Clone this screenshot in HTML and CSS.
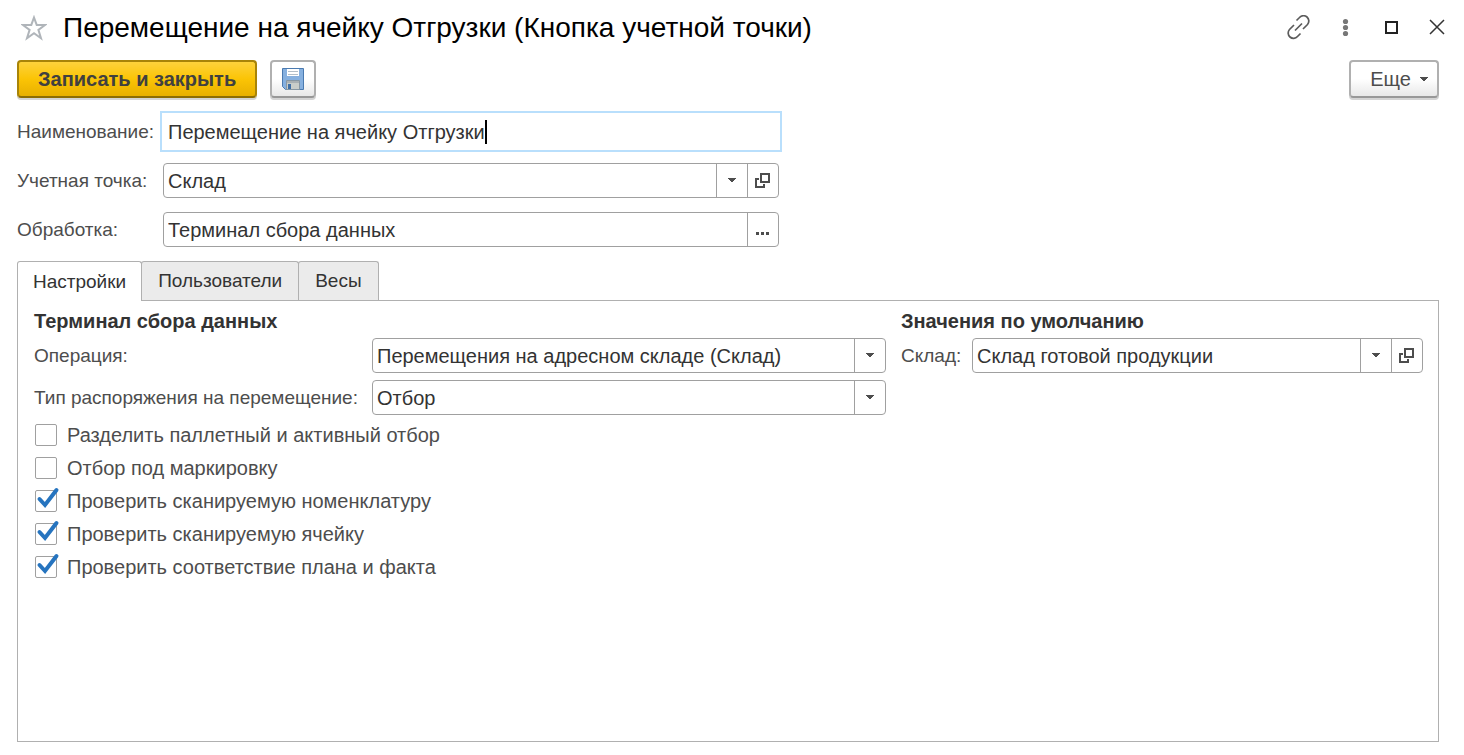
FILE: index.html
```html
<!DOCTYPE html>
<html lang="ru">
<head>
<meta charset="utf-8">
<meta name="viewport" content="width=device-width, initial-scale=1">
<title>Перемещение на ячейку Отгрузки (Кнопка учетной точки)</title>
<link rel="stylesheet" href="styles.css">
</head>
<body class="window">
<svg class="sprite" aria-hidden="true">
  <symbol id="arrow" viewBox="0 0 8 5"><path d="M0 0h8v1H7v1H6v1H5v1H3V3H2V2H1V1H0z" fill="#4d4d4d"/></symbol>
  <symbol id="open" viewBox="0 0 16 16"><path d="M6 1h8v8H6zM4 6H1v8h8v-3" fill="none" stroke="#4d4d4d" stroke-width="2"/></symbol>
  <symbol id="tick" viewBox="0 0 26 26"><path d="M5.500 13l5.500 6L22.500 4" fill="none" stroke="#2674bf" stroke-width="4" stroke-linecap="round"/></symbol>
</svg>

<header class="titlebar">
  <button class="icon-button" type="button" aria-label="Добавить в избранное">
    <svg width="26" height="26" viewBox="0 0 26 26"><path d="M13 2.500l2.700 7.400 8.300.1-6.600 4.900 2.600 8.400-7-5-7 5 2.600-8.400L2 10l8.300-.1z" fill="none" stroke="#b0b5ba" stroke-width="2"/></svg>
  </button>
  <h1 class="title">Перемещение на ячейку Отгрузки (Кнопка учетной точки)</h1>
  <div class="window-tools">
    <button class="icon-button" type="button" aria-label="Получить ссылку">
      <svg width="26" height="26" viewBox="0 0 26 26" fill="none" stroke="#5c5c5c" stroke-width="1.700"><path d="M9 15.500l7-7M10.500 5.500l3-3a5 5 0 0 1 8 7l-4.500 4.500M8 10l-4.500 4.500a5 5 0 0 0 8 7l3-3"/></svg>
    </button>
    <button class="icon-button" type="button" aria-label="Меню">
      <svg width="26" height="26" viewBox="0 0 26 26" fill="#777"><circle cx="13.500" cy="6.500" r="2.600"/><circle cx="13.500" cy="12.500" r="2.600"/><circle cx="13.500" cy="18.500" r="2.600"/></svg>
    </button>
    <button class="icon-button" type="button" aria-label="Развернуть">
      <svg width="26" height="26" viewBox="0 0 26 26"><path d="M8 7h11v11H8z" fill="none" stroke="#222" stroke-width="2"/></svg>
    </button>
    <button class="icon-button" type="button" aria-label="Закрыть">
      <svg width="26" height="26" viewBox="0 0 26 26"><path d="M6 5l14 14M20 5l-14 14" stroke="#333" stroke-width="1.500"/></svg>
    </button>
  </div>
</header>

<div class="toolbar">
  <button class="button button-primary" type="button">Записать и закрыть</button>
  <button class="button button-save" type="button" aria-label="Записать">
    <svg width="22" height="22" viewBox="0 0 22 22"><path d="M.5.500h21v21H3.500l-3-3z" fill="#86b0df" stroke="#4a7ab0"/><path d="M5 1h12v7H5z" fill="#fff"/><path d="M6 3.500h10M6 6.500h10" stroke="#b3bfc9"/><path d="M4.500 12.500h13v9h-13z" fill="#c9cdc9" stroke="#8797a3"/><path d="M5 13h12v2H5z" fill="#a9b0b3"/><path d="M6 16h3v5H6z" fill="#3f6fa6"/></svg>
  </button>
  <button class="button button-more" type="button">Еще <svg width="8" height="5"><use href="#arrow"/></svg></button>
</div>

<form class="main-form">
  <label class="label" for="name">Наименование:</label>
  <label class="field field-active"><input class="control control-name" id="name" type="text" value="Перемещение на ячейку Отгрузки"><span class="caret"></span></label>

  <label class="label" for="point">Учетная точка:</label>
  <div class="field">
    <div class="dropdown"><select class="control" id="point"><option>Склад</option></select><span class="cell dropdown-arrow"><svg width="8" height="5"><use href="#arrow"/></svg></span></div>
    <button class="cell" type="button" aria-label="Открыть"><svg width="16" height="16"><use href="#open"/></svg></button>
  </div>

  <label class="label" for="handler">Обработка:</label>
  <div class="field">
    <input class="control" id="handler" type="text" value="Терминал сбора данных">
    <button class="cell" type="button" aria-label="Выбрать"><svg width="14" height="12" viewBox="0 0 14 12"><path d="M0 8h3v3H0zM5 8h3v3H5zM10 8h3v3h-3z" fill="#4d4d4d"/></svg></button>
  </div>
</form>

<div class="tabs" role="tablist">
  <button class="tab tab-current" type="button" role="tab" aria-selected="true">Настройки</button>
  <button class="tab" type="button" role="tab" aria-selected="false">Пользователи</button>
  <button class="tab" type="button" role="tab" aria-selected="false">Весы</button>
</div>

<main class="panel" role="tabpanel">
  <section class="group">
    <h2 class="heading">Терминал сбора данных</h2>
    <div class="rows rows-terminal">
      <label class="label" for="operation">Операция:</label>
      <div class="field"><div class="dropdown"><select class="control" id="operation"><option>Перемещения на адресном складе (Склад)</option></select><span class="cell dropdown-arrow"><svg width="8" height="5"><use href="#arrow"/></svg></span></div></div>
      <label class="label" for="kind">Тип распоряжения на перемещение:</label>
      <div class="field"><div class="dropdown"><select class="control" id="kind"><option>Отбор</option></select><span class="cell dropdown-arrow"><svg width="8" height="5"><use href="#arrow"/></svg></span></div></div>
    </div>
    <div class="checks">
      <label class="check"><input class="box" type="checkbox"><svg class="tick"><use href="#tick"/></svg>Разделить паллетный и активный отбор</label>
      <label class="check"><input class="box" type="checkbox"><svg class="tick"><use href="#tick"/></svg>Отбор под маркировку</label>
      <label class="check"><input class="box" type="checkbox" checked><svg class="tick"><use href="#tick"/></svg>Проверить сканируемую номенклатуру</label>
      <label class="check"><input class="box" type="checkbox" checked><svg class="tick"><use href="#tick"/></svg>Проверить сканируемую ячейку</label>
      <label class="check"><input class="box" type="checkbox" checked><svg class="tick"><use href="#tick"/></svg>Проверить соответствие плана и факта</label>
    </div>
  </section>
  <section class="group">
    <h2 class="heading">Значения по умолчанию</h2>
    <div class="rows rows-defaults">
      <label class="label" for="store">Склад:</label>
      <div class="field">
        <div class="dropdown"><select class="control" id="store"><option>Склад готовой продукции</option></select><span class="cell dropdown-arrow"><svg width="8" height="5"><use href="#arrow"/></svg></span></div>
        <button class="cell" type="button" aria-label="Открыть"><svg width="16" height="16"><use href="#open"/></svg></button>
      </div>
    </div>
  </section>
</main>
</body>
</html>
```

FILE: styles.css
```css
* {
  box-sizing: border-box;
}

.window {
  display: flex;
  flex-direction: column;
  min-height: 100vh;
  margin: 0;
  padding: 8px 25px 13px 17px;
  background: #fff;
  color: #333;
  font: 20px/24px "Liberation Sans", Arial, sans-serif;
}

.sprite {
  position: absolute;
  width: 0;
  height: 0;
}

svg {
  display: block;
  flex: none;
}

button,
input,
select {
  margin: 0;
  font: inherit;
  color: inherit;
}

.titlebar {
  display: flex;
  align-items: center;
  height: 40px;
  margin-right: -11px;
  padding-left: 4px;
}

.icon-button {
  padding: 0;
  border: 0;
  background: none;
}

.title {
  flex: 1;
  margin: 0 0 0 16px;
  color: #000;
  font-size: 28px;
  font-weight: 400;
  line-height: 40px;
}

.window-tools {
  display: flex;
  gap: 20px;
}

.toolbar {
  display: flex;
  gap: 13px;
  margin-top: 12px;
}

.button {
  display: flex;
  align-items: center;
  justify-content: center;
  height: 38px;
  border: 2px solid #b0b0b0;
  border-bottom-color: #989898;
  border-radius: 4px;
  background: linear-gradient(#fff 50%, #e8e8e8);
  box-shadow: 0 2px 0 #d4d4d4;
  color: #4d4d4d;
}

.button-primary {
  padding: 0 19px;
  border-color: #a88408;
  border-bottom-color: #8c6d04;
  background: linear-gradient(#fdd23c, #fbc405 50%, #e8b000);
  color: #404040;
  font-weight: 700;
}

.button-save {
  width: 46px;
  padding: 0;
}

.button-more {
  gap: 9px;
  width: 90px;
  margin-left: auto;
  padding: 0 0 0 10px;
}

.main-form {
  display: grid;
  grid-template-columns: 146px minmax(0, 616px);
  row-gap: 14px;
  margin-top: 16px;
}

.label {
  align-self: center;
  color: #4d4d4d;
  font-size: 19px;
  white-space: nowrap;
}

.field {
  display: flex;
  height: 35px;
  border: 1px solid #a0a0a0;
  border-radius: 4px;
  background: #fff;
}

.field-active {
  align-items: center;
  height: 41px;
  margin: -3px;
  border: 2px solid #b9dffc;
  border-radius: 0;
}

.control {
  flex: 1;
  min-width: 0;
  padding: 0 4px;
  border: 0;
  outline: 0;
  background: none;
  appearance: none;
}

.control-name {
  flex: none;
  padding: 0 0 0 6px;
  caret-color: transparent;
  field-sizing: content;
}

.caret {
  width: 2px;
  height: 24px;
  background: #000;
}

.dropdown {
  display: grid;
  flex: 1;
  grid-template-columns: minmax(0, 1fr) 31px;
}

.dropdown .control {
  grid-area: 1 / 1 / 2 / 3;
}

.dropdown-arrow {
  grid-area: 1 / 2;
  pointer-events: none;
}

.cell {
  display: flex;
  align-items: center;
  justify-content: center;
  width: 31px;
  padding: 0;
  border: 0;
  border-left: 1px solid #a0a0a0;
  background: none;
}

.tabs {
  display: flex;
  margin-top: 14px;
}

.tab {
  height: 39px;
  padding: 0 15px;
  border: 1px solid #b0b0b0;
  border-bottom: 0;
  border-radius: 3px 3px 0 0;
  background: #ebebeb;
  font-size: 19px;
}

.tab + .tab {
  padding: 0 16px;
  margin-left: -1px;
}

.tab-current {
  z-index: 1;
  height: 40px;
  margin-bottom: -1px;
  background: #fff;
}

.panel {
  display: grid;
  flex: 1;
  grid-template-columns: 852fr 522fr;
  column-gap: 15px;
  padding: 8px 15px 16px 16px;
  border: 1px solid #b0b0b0;
}

.heading {
  margin: 0 0 5px;
  font-size: 20px;
  line-height: 24px;
}

.rows {
  display: grid;
  row-gap: 7px;
}

.rows-terminal {
  grid-template-columns: 338px minmax(0, 1fr);
}

.rows-defaults {
  grid-template-columns: 71px minmax(0, 1fr);
}

.checks {
  display: grid;
  justify-items: start;
  gap: 9px;
  margin-top: 8px;
}

.check {
  display: grid;
  grid-template-columns: 22px auto;
  column-gap: 10px;
  align-items: center;
  padding-left: 1px;
  color: #4d4d4d;
}

.box {
  grid-area: 1 / 1;
  width: 22px;
  height: 22px;
  border: 1px solid #a0a0a0;
  border-radius: 2px;
  background: #fff;
  appearance: none;
}

.tick {
  display: none;
  grid-area: 1 / 1;
  width: 26px;
  height: 26px;
  margin: -4px 0 0 -1px;
  pointer-events: none;
}

.box:checked + .tick {
  display: block;
}
```
